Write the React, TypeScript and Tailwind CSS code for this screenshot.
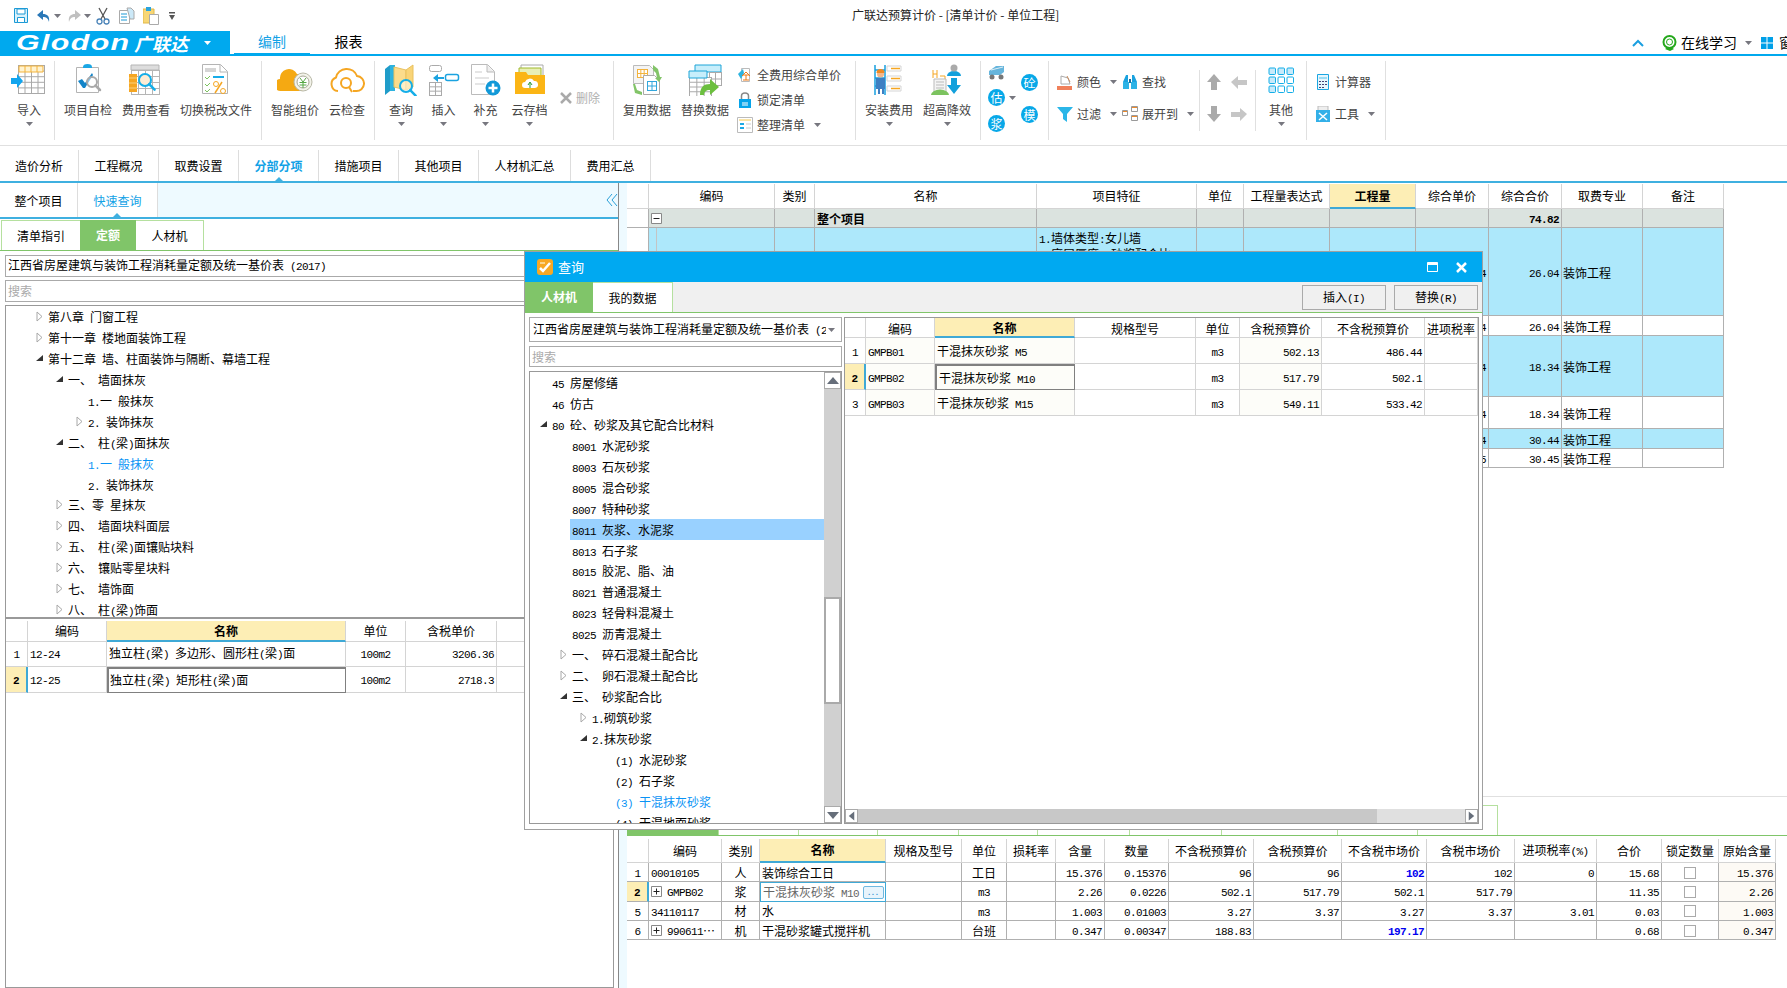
import React from 'react';

const MONO = "[font-family:'Liberation_Mono',monospace] text-[11px] tracking-[-0.6px]";

// latin and digits sit in half width cells, like the bitmap font of the original
const T: React.FC<{ s: string; bold?: boolean }> = ({ s, bold }) => (
  <span className={`whitespace-pre ${bold ? 'font-bold' : ''}`}>
    {s.split(/([\x20-\x7e]+)/).map((p, i) =>
      /^[\x20-\x7e]+$/.test(p) ? (
        <span key={i} className={MONO}>{p}</span>
      ) : (
        <span key={i}>{p}</span>
      ),
    )}
  </span>
);

const Caret: React.FC<{ className?: string }> = ({ className = '' }) => (
  <svg width="7" height="4" viewBox="0 0 7 4" className={`shrink-0 ${className}`}>
    <path d="M0 0h7L3.500 4z" fill="#77777f" />
  </svg>
);

const Open: React.FC = () => (
  <svg width="7" height="11" viewBox="0 0 7 11" className="shrink-0">
    <path d="M1 1l5 4.500-5 4.500z" fill="#fff" stroke="#a8a8a8" />
  </svg>
);

const Shut: React.FC = () => (
  <svg width="7" height="7" viewBox="0 0 7 7" className="shrink-0">
    <path d="M7 0v6H0z" fill="#333" />
  </svg>
);

const Icon: React.FC<{ w?: number; h?: number; children: React.ReactNode }> = ({ w = 36, h = 32, children }) => (
  <svg width={w} height={h} viewBox={`0 0 ${w} ${h}`} className="shrink-0">{children}</svg>
);

const Lines: React.FC<{ x: number; y: number; w: number; h: number; c?: number; r?: number; k?: string }> = ({ x, y, w, h, c = 3, r = 3, k = '#b5b5b5' }) => (
  <g stroke={k} fill="none">
    <rect x={x + 0.5} y={y + 0.5} width={w} height={h} fill="#fff" />
    {Array.from({ length: c - 1 }).map((_, i) => (
      <path key={i} d={`M${x + 0.5 + ((i + 1) * w) / c} ${y}v${h}`} />
    ))}
    {Array.from({ length: r - 1 }).map((_, i) => (
      <path key={i} d={`M${x} ${y + 0.5 + ((i + 1) * h) / r}h${w}`} />
    ))}
  </g>
);

const Glass: React.FC<{ x: number; y: number; r?: number; k?: string }> = ({ x, y, r = 5, k = '#15aee8' }) => (
  <g fill="none" stroke={k}>
    <circle cx={x} cy={y} r={r} strokeWidth="2" fill="#fff" fillOpacity="0.5" />
    <path d={`M${x + r * 0.7} ${y + r * 0.7}l${r * 0.9} ${r * 0.9}`} strokeWidth="2.500" strokeLinecap="round" />
  </g>
);

const ImportIcon = () => (
  <Icon>
    <Lines x={7} y={1} w={26} h={28} c={4} r={5} k="#a9a9a9" />
    <path d="M8 2h24v6H8z" fill="#fff3cf" stroke="#f3b33d" />
    <path d="M14 2v6M20 2v6M26 2v6" stroke="#f3b33d" />
    <path d="M0 14h6v-4l6 7-6 7v-4H0z" fill="#12a5ee" />
  </Icon>
);
const SelfCheckIcon = () => (
  <Icon>
    <path d="M6.500 3.500h22v25h-22z" fill="#fff" stroke="#b4b4b4" />
    <path d="M13 3a4.500 3 0 019 0v1h-9z" fill="#1aa7e5" />
    <path d="M8 17l4-2 3 4 7-10 1 2-8 13h-2z" fill="#1384c8" />
    <Glass x={22} y={18} r={5} k="#a9a9a9" />
  </Icon>
);
const FeeIcon = () => (
  <Icon>
    <path d="M3 1h28v5H3z" fill="#ddd" stroke="#b5b5b5" />
    <Lines x={3} y={6} w={28} h={24} c={4} r={4} />
    <path d="M1 10h8v18H1z" fill="#f5a623" />
    <path d="M1 14h8M1 19h8M1 24h8" stroke="#fbd07c" />
    <circle cx="17" cy="16" r="6" fill="#fbd9a8" />
    <Glass x={17} y={16} r={6} />
  </Icon>
);
const TaxIcon = () => (
  <Icon>
    <path d="M4.500 .5h18l7 7v22h-25z" fill="#fff" stroke="#b4b4b4" />
    <path d="M22 1v7h7" fill="none" stroke="#b4b4b4" />
    <path d="M7 4h11v4H7z" fill="#d5d5d5" />
    <path d="M7 13l2 2 3-3M7 20l2 2 3-3M7 26l2 2 3-3" stroke="#7cc35f" fill="none" />
    <path d="M15 13h11" stroke="#18ace8" strokeWidth="2" />
    <path d="M24 18l-7 11" stroke="#f5a623" strokeWidth="1.500" />
    <circle cx="18" cy="20" r="2.500" fill="none" stroke="#f5a623" />
    <circle cx="25" cy="27" r="2.500" fill="none" stroke="#f5a623" />
  </Icon>
);
const SmartIcon = () => (
  <Icon>
    <path d="M4 27a6 6 0 01-1-12 9 9 0 0117-5h6v17z" fill="#f5a912" />
    <circle cx="26" cy="18" r="9" fill="#f3f3ea" stroke="#b9b9a8" />
    <circle cx="26" cy="18" r="6" fill="#fff" stroke="#a8a896" />
    <path d="M23 14l3 4 3-4M22.500 18.500h7M22.500 21h7M26 18v6" stroke="#57a845" fill="none" />
  </Icon>
);
const CloudIcon = () => (
  <Icon>
    <path d="M9 27a7 7 0 01-2-13.500A11 11 0 0128 12a7.500 7.500 0 01-1 15h-3" fill="none" stroke="#f5a623" strokeWidth="2" />
    <circle cx="17" cy="19" r="5" fill="none" stroke="#f5a623" strokeWidth="2" />
    <path d="M20 23l3 5" stroke="#f5a623" strokeWidth="2" />
  </Icon>
);
const QueryIcon = () => (
  <Icon w={34}>
    <path d="M1 5l5-4v26l-5 4z" fill="#1f9cc9" />
    <path d="M6 1h5v26H6z" fill="#2db3df" />
    <path d="M10 3l12 3v20l-12-3z" fill="#fbdc8c" stroke="#e9c15f" />
    <path d="M22 6l7-5v22l-7 3z" fill="#f9d477" stroke="#e9c15f" />
    <Glass x={22} y={22} r={6} />
  </Icon>
);
const InsertIcon = () => (
  <Icon w={32}>
    <rect x="1.500" y="1.500" width="12" height="6" rx="2" fill="#fff" stroke="#aaa" />
    <Lines x={1} y={18} w={12} h={13} c={2} r={3} k="#aaa" />
    <path d="M5 14l5-4v3h6v2h-6v3z" fill="#1ba3e0" />
    <rect x="17.500" y="10.500" width="13" height="6" rx="2" fill="#fff" stroke="#1ba3e0" strokeWidth="1.500" />
  </Icon>
);
const AddIcon = () => (
  <Icon w={32}>
    <path d="M1.500 .5h16l7 7v23h-23z" fill="#fff" stroke="#bbb" />
    <path d="M17 1v7h7" fill="#eee" stroke="#bbb" />
    <path d="M5 8h7M5 14h14M5 20h10" stroke="#ddd" strokeWidth="1.500" />
    <circle cx="23" cy="24" r="7.500" fill="#1299d8" />
    <path d="M23 19.500v9M18.500 24h9" stroke="#fff" strokeWidth="2.500" />
  </Icon>
);
const SaveIcon = () => (
  <Icon w={32}>
    <path d="M7 1h22v14H7z" fill="#fff" stroke="#aaa" />
    <path d="M5 4h22v14H5z" fill="#e8efb5" stroke="#a0ba2f" />
    <path d="M1 8h11l2 3h17v19H1z" fill="#fbb515" />
    <path d="M11 24a3 3 0 010-6 5 5 0 019-1 3.500 3.500 0 011 7z" fill="#fff" />
    <path d="M16 24v-5M14 21l2-3 2 3" stroke="#2e9a3a" fill="none" />
  </Icon>
);
const ReuseIcon = () => (
  <Icon w={32}>
    <path d="M2.500 1.500h16l4 4v14h-20z" fill="#f4f4f4" stroke="#bbb" />
    <Lines x={6} y={5} w={10} h={8} c={3} r={2} k="#f3b33d" />
    <path d="M12.500 11.500h11l5 5v14h-16z" fill="#fff" stroke="#aaa" />
    <Lines x={16} y={17} w={9} h={9} c={2} r={2} k="#33a7dc" />
    <path d="M22 1l5 4 2 8h2l-3 5-4-4h2l-1-5-3-3z" fill="#82c468" />
    <path d="M2 20h2l2 6 5 2v3l-7-2z" fill="#82c468" />
  </Icon>
);
const ReplaceIcon = () => (
  <Icon w={34}>
    <path d="M7 1h26v7H7z" fill="#c7eefb" stroke="#1fa5d8" />
    <Lines x={21} y={8} w={12} h={13} c={2} r={2} k="#aaa" />
    <Lines x={1} y={13} w={22} h={19} c={3} r={4} k="#aaa" />
    <path d="M1 7h18v7H1z" fill="#c7eefb" stroke="#1fa5d8" />
    <path d="M12 31c0-8 4-11 10-11v-5l9 8-9 8v-5c-4 0-6 2-6 5z" fill="#6cbf3f" />
  </Icon>
);
const InstallIcon = () => (
  <Icon w={32}>
    <path d="M2 1v30M12 1v30M2 6h10M2 14h10M2 22h10" stroke="#18a0df" strokeWidth="1.500" fill="none" />
    <path d="M14 2h14v5H14zM14 12h14v5H14zM14 22h14v5H14z" fill="#fff" stroke="#d5d5d5" />
    <path d="M18 4.500h9M18 14.500h9M18 24.500h9" stroke="#f5a623" strokeWidth="1.500" />
    <path d="M3 14h9v11h-1v5H9v-5H7v5H5v-5H3z" fill="#3d7fc2" />
    <circle cx="7.500" cy="10" r="3.500" fill="#f3b78a" />
    <path d="M3.500 9a4 4 0 018 0z" fill="#f08a24" />
  </Icon>
);
const HighIcon = () => (
  <Icon w={32}>
    <path d="M2 6v8M6 6v8M2 10h4M9 12h5v19" stroke="#f5a623" fill="none" />
    <path d="M3 15h12v15H3z" fill="#f4f4f4" stroke="#bbb" />
    <path d="M5 18h8M5 21h8M5 24h8" stroke="#bbb" />
    <path d="M0 31a5 3 0 0118 0z" fill="#7cc35f" />
    <path d="M16 12a7 5 0 0114 0z" fill="#12a0dc" />
    <circle cx="23" cy="4" r="3.500" fill="#aaa" />
    <path d="M20 14h6v7h4l-7 9-7-9h4z" fill="#12a0dc" />
  </Icon>
);
const Cn: React.FC<{ s: string }> = ({ s }) => (
  <span className="w-[17px] h-[17px] rounded-full bg-[#08a8e8] text-white text-[12px] leading-[17px] text-center shrink-0">{s}</span>
);

const Big: React.FC<{ w: string; label: string; icon: React.ReactNode; caret?: boolean }> = ({ w, label, icon, caret = true }) => (
  <div className={`${w} flex flex-col items-center shrink-0`}>
    <div className="h-[36px] mt-[6px] flex items-center justify-center">{icon}</div>
    <div className="h-[16px] mt-[4px] leading-[16px] text-[12px] text-[#444] whitespace-nowrap">{label}</div>
    {caret && <Caret className="mt-[4px]" />}
  </div>
);

const Sep = () => <div className="w-px h-[79px] mt-[5px] bg-[#e0e0e0] shrink-0" />;
const ShortSep = () => <div className="w-px h-[61px] mt-[14px] bg-[#e0e0e0] shrink-0" />;

const Small: React.FC<{ label: string; icon: React.ReactNode; w: string; caret?: boolean }> = ({ label, icon, w, caret }) => (
  <div className={`${w} h-[16px] flex items-center gap-[4px] text-[12px] text-[#444] whitespace-nowrap`}>
    <span className="w-[16px] flex justify-center">{icon}</span>
    <span>{label}</span>
    {caret && <Caret className="ml-[5px]" />}
  </div>
);

const Ribbon = () => (
  <div className="h-[90px] flex border-b border-[#e0e0e0] shrink-0">
    <div className="w-[54px] pl-[2px]"><Big w="w-[54px]" label="导入" icon={<ImportIcon />} /></div>
    <Sep />
    <Big w="w-[62px] pl-[4px]" label="项目自检" icon={<SelfCheckIcon />} caret={false} />
    <Big w="w-[58px]" label="费用查看" icon={<FeeIcon />} caret={false} />
    <Big w="w-[82px]" label="切换税改文件" icon={<TaxIcon />} caret={false} />
    <div className="w-[4px]" />
    <Sep />
    <Big w="w-[66px]" label="智能组价" icon={<SmartIcon />} caret={false} />
    <Big w="w-[38px]" label="云检查" icon={<CloudIcon />} caret={false} />
    <div className="w-[8px]" />
    <Sep />
    <div className="w-[5px]" />
    <Big w="w-[42px]" label="查询" icon={<QueryIcon />} />
    <Big w="w-[43px]" label="插入" icon={<InsertIcon />} />
    <Big w="w-[41px]" label="补充" icon={<AddIcon />} />
    <Big w="w-[47px]" label="云存档" icon={<SaveIcon />} />
    <div className="w-[60px] h-[16px] mt-[34px] flex items-center gap-[4px] pl-[7px] text-[12px] text-[#b0b0b0]">
      <svg width="12" height="12" viewBox="0 0 12 12"><path d="M1 1l10 10M11 1L1 11" stroke="#aaa" strokeWidth="2.500" /></svg>
      删除
    </div>
    <Sep />
    <div className="w-[4px]" />
    <Big w="w-[58px]" label="复用数据" icon={<ReuseIcon />} caret={false} />
    <Big w="w-[58px]" label="替换数据" icon={<ReplaceIcon />} caret={false} />
    <div className="w-[121px] flex flex-col gap-[9px] pt-[11px] pl-[3px]">
      <Small w="w-full" label="全费用综合单价" icon={
        <Icon w={16} h={16}><path d="M4.500 1.500h8v13h-8z" fill="#fff" stroke="#bbb" /><path d="M1 7l5-5 1 4-3 6z" fill="#2db3df" /><path d="M5 9l4-4 4 4M6 8h6M9 8v5M6 13h6" stroke="#ef7d1a" fill="none" /></Icon>
      } />
      <Small w="w-full" label="锁定清单" icon={
        <Icon w={16} h={16}><path d="M4.500 7V4a3.500 3 0 017 0v3" fill="none" stroke="#888" strokeWidth="1.500" /><path d="M2 7h12v9H2z" fill="#06a4ea" /><path d="M5 11h6M5 13h6" stroke="#fff" /></Icon>
      } />
      <Small w="w-full" label="整理清单" caret icon={
        <Icon w={16} h={16}><path d="M.5 .5h15v15H.5z" fill="#fff" stroke="#bbb" /><path d="M2 2h12v2H2z" fill="#f8e3a6" /><path d="M3 6h4v2H3zM3 10h4v2H3z" fill="#1ba9e4" /><path d="M9 7h5M9 11h5" stroke="#ccc" /></Icon>
      } />
    </div>
    <Sep />
    <div className="w-[4px]" />
    <Big w="w-[58px]" label="安装费用" icon={<InstallIcon />} />
    <Big w="w-[58px]" label="超高降效" icon={<HighIcon />} />
    <div className="w-[4px]" />
    <Sep />
    <div className="w-[67px] flex pt-[8px] pl-[7px]">
      <div className="w-[33px] flex flex-col items-start gap-[9px]">
        <Icon w={18} h={16}><path d="M1 7l7-5h8v6l-4 3H1z" fill="#66b5dc" /><path d="M3 6l12-3" stroke="#dfeef5" /><circle cx="4" cy="13" r="2.500" fill="#777" /><circle cx="13" cy="13" r="2.500" fill="#777" /></Icon>
        <div className="flex items-center gap-[4px]"><Cn s="估" /><Caret /></div>
        <Cn s="浆" />
      </div>
      <div className="flex flex-col gap-[15px] pt-[10px]"><Cn s="砼" /><Cn s="模" /></div>
    </div>
    <Sep />
    <div className="w-[150px] flex flex-col gap-[16px] pt-[18px] pl-[8px]">
      <div className="flex">
        <Small w="w-[65px]" label="颜色" caret icon={
          <Icon w={16} h={16}><path d="M4 2l7 2 2 6-9 0z" fill="#fff" stroke="#aaa" /><path d="M10 2l3 6" stroke="#c98a5a" /><path d="M0 12h15v4H0z" fill="#f0805a" /></Icon>
        } />
        <Small w="w-[70px]" label="查找" icon={
          <Icon w={16} h={16}><path d="M1 8l3-7h2v7zM15 8l-3-7h-2v7z" fill="#1aa2df" /><path d="M1 8h6v7H1zM9 8h6v7H9z" fill="#2db3e6" /><path d="M7 5h2v4H7z" fill="#15719f" /></Icon>
        } />
      </div>
      <div className="flex">
        <Small w="w-[65px]" label="过滤" caret icon={
          <Icon w={16} h={16}><path d="M0 1h16l-6 7v8l-4-3V8z" fill="#2bb6e8" /></Icon>
        } />
        <Small w="w-[70px]" label="展开到" caret icon={
          <Icon w={16} h={16}><path d="M.5 4.500h5v5h-5zM9.500 .5h6v5h-6zM9.500 9.500h6v5h-6z" fill="#fff" stroke="#999" /><path d="M1 5h4v1H1zM10 1h5v1h-5zM10 10h5v1h-5z" fill="#ef8a2a" /></Icon>
        } />
      </div>
    </div>
    <ShortSep />
    <div className="w-[55px] grid grid-cols-[25px_25px] grid-rows-2 pt-[18px] h-[82px] pl-[6px]">
      <svg width="16" height="16" viewBox="0 0 16 16"><path d="M8 0l7 8h-4v8H5V8H1z" fill="#aaa" /></svg>
      <svg width="16" height="16" viewBox="0 0 16 16"><path d="M0 8l7-6v4h9v5H7v4z" fill="#c6c6c6" /></svg>
      <svg width="16" height="16" viewBox="0 0 16 16"><path d="M5 0h6v8h4l-7 8-7-8h4z" fill="#aaa" /></svg>
      <svg width="16" height="16" viewBox="0 0 16 16"><path d="M16 8l-7-6v4H0v5h9v4z" fill="#c6c6c6" /></svg>
    </div>
    <ShortSep />
    <div className="w-[50px]">
      <Big w="w-[50px]" label="其他" icon={
        <Icon w={26} h={26}>
          {[1, 10, 19].map((y) => [1, 10, 19].map((x) => (
            <rect key={`${x}${y}`} x={x} y={y} width="6.500" height="6.500" rx="1" fill={x === 1 || y === 1 ? '#c8eafa' : '#fff'} stroke="#12aee8" />
          )))}
        </Icon>
      } />
    </div>
    <Sep />
    <div className="w-[78px] flex flex-col gap-[16px] pt-[18px] pl-[8px]">
      <Small w="w-full" label="计算器" icon={
        <Icon w={16} h={16}><path d="M2.500 .5h11v15h-11z" fill="#e6f6fd" stroke="#1aa6e2" /><path d="M4 3h8v2H4z" fill="#9adcf5" /><path d="M4 7h2v1H4zM7 7h2v1H7zM10 7h2v1h-2zM4 10h2v1H4zM7 10h2v1H7zM10 10h2v1h-2zM4 13h2v1H4zM7 13h2v1H7z" fill="#447" /></Icon>
      } />
      <Small w="w-full" label="工具" caret icon={
        <Icon w={16} h={16}><path d="M3 0h10v8H3z" fill="#eee" stroke="#bbb" /><path d="M1 4h14v12H1z" fill="#33b0e8" /><path d="M4 7l8 7M12 7l-8 7" stroke="#fff" strokeWidth="1.500" /></Icon>
      } />
    </div>
    <Sep />
  </div>
);

const TITLE_ICONS = (
  <div className="w-[852px] h-full flex items-center pl-[14px] shrink-0">
    <svg width="14" height="15" viewBox="0 0 14 15"><path d="M.5 .5h13v14H.5z" fill="#d9f1fb" stroke="#1c9ad6" /><path d="M3 1h8v5H3z" fill="#fff" stroke="#1c9ad6" /><path d="M3.500 9.500h7v5h-7z" fill="#fff" stroke="#1c9ad6" /></svg>
    <svg width="14" height="14" viewBox="0 0 14 14" className="ml-[9px]"><path d="M6 1L0 6l6 5V8c3 0 5 1 6 5 1-6-2-8-6-8z" fill="#2a78b8" /></svg>
    <Caret className="ml-[3px]" />
    <svg width="14" height="14" viewBox="0 0 14 14" className="ml-[6px]"><path d="M8 1l6 5-6 5V8c-3 0-5 1-6 5C1 7 4 5 8 5z" fill="#c0c0c0" /></svg>
    <Caret className="ml-[3px]" />
    <svg width="14" height="18" viewBox="0 0 14 18" className="ml-[5px]"><path d="M3 1l6 11M11 1L5 12" stroke="#555" strokeWidth="1.300" /><circle cx="3.500" cy="14.500" r="2.500" fill="none" stroke="#4a83b8" strokeWidth="1.300" /><circle cx="10.500" cy="14.500" r="2.500" fill="none" stroke="#4a83b8" strokeWidth="1.300" /></svg>
    <svg width="16" height="17" viewBox="0 0 16 17" className="ml-[9px]"><path d="M.5 3.500h10v13H.5z" fill="#fff" stroke="#aaa" /><path d="M2 7h6M2 10h6M2 13h6" stroke="#1c9ad6" /><path d="M8 1h4l3 3v8h-4z" fill="#cce9f8" stroke="#aaa" /></svg>
    <svg width="16" height="19" viewBox="0 0 16 19" className="ml-[8px]"><path d="M0 3h11v14H0z" fill="#f8d775" stroke="#e0b84a" /><path d="M3 1h5v4H3z" fill="#2aa4dd" /><path d="M6.500 8.500h9v10h-9z" fill="#fff" stroke="#aaa" /></svg>
    <svg width="6" height="8" viewBox="0 0 6 8" className="ml-[10px]"><path d="M0 0h6v1.500H0zM0 3h6L3 8z" fill="#555" /></svg>
  </div>
);

const Head: React.FC<{ s: string; on?: boolean }> = ({ s, on }) => (
  <div className={`h-full flex items-center justify-center overflow-hidden whitespace-nowrap border-r border-b border-[#d4d4d4] ${on ? 'bg-[#fdeeb5] font-bold !border-b-[2px] !border-b-[#3fa9d6]' : 'bg-white'}`}>
    <T s={s} bold={on} />
  </div>
);

const Cell: React.FC<{ className?: string; children?: React.ReactNode }> = ({ className = '', children }) => (
  <div className={`h-full flex items-center overflow-hidden whitespace-nowrap border-r border-b ${className}`}>{children}</div>
);

const RowNo: React.FC<{ n: number; on?: boolean }> = ({ n, on }) => (
  <Cell className={`justify-center ${on ? 'bg-[#fdeeb5] font-bold !border-r-[2px] !border-r-[#3fa9d6]' : ''}`}><T s={String(n)} bold={on} /></Cell>
);

const Plus = () => (
  <svg width="11" height="11" viewBox="0 0 11 11" className="shrink-0 mr-[5px]"><path d="M.5 .5h10v10H.5z" fill="#fff" stroke="#888" /><path d="M2.500 5.500h6M5.500 2.500v6" stroke="#222" /></svg>
);
const Minus = () => (
  <svg width="11" height="11" viewBox="0 0 11 11" className="shrink-0"><path d="M.5 .5h10v10H.5z" fill="#fff" stroke="#888" /><path d="M2.500 5.500h6" stroke="#222" /></svg>
);

// --- left side ---
type Node = { l: 0 | 1 | 2 | 3; t: string; a?: 'open' | 'shut'; hit?: boolean; on?: boolean };

const PAD = ['pl-[6px]', 'pl-[26px]', 'pl-[46px]', 'pl-[69px]'];
const PAD_L = ['pl-[26px]', 'pl-[46px]', 'pl-[66px]', 'pl-[86px]'];

const TreeRow: React.FC<{ n: Node; pad: string }> = ({ n, pad }) => (
  <div className={`h-[20.950px] flex items-center ${pad} shrink-0`}>
    <span className="w-[14px] flex justify-center shrink-0">
      {n.a === 'open' && <Open />}
      {n.a === 'shut' && <Shut />}
    </span>
    <span className={`flex-1 pl-[2px] h-full leading-[21px] whitespace-pre ${n.on ? 'bg-[#99d1ff]' : ''} ${n.hit ? 'text-[#0a93f5]' : ''}`}>
      <T s={n.t} />
    </span>
  </div>
);

const LEFT_TREE: Node[] = [
  { l: 0, t: '第八章 门窗工程', a: 'open' },
  { l: 0, t: '第十一章 楼地面装饰工程', a: 'open' },
  { l: 0, t: '第十二章 墙、柱面装饰与隔断、幕墙工程', a: 'shut' },
  { l: 1, t: '一、 墙面抹灰', a: 'shut' },
  { l: 2, t: '1.一 般抹灰' },
  { l: 2, t: '2. 装饰抹灰', a: 'open' },
  { l: 1, t: '二、 柱(梁)面抹灰', a: 'shut' },
  { l: 2, t: '1.一 般抹灰', hit: true },
  { l: 2, t: '2. 装饰抹灰' },
  { l: 1, t: '三、零 星抹灰', a: 'open' },
  { l: 1, t: '四、 墙面块料面层', a: 'open' },
  { l: 1, t: '五、 柱(梁)面镶贴块料', a: 'open' },
  { l: 1, t: '六、 镶贴零星块料', a: 'open' },
  { l: 1, t: '七、 墙饰面', a: 'open' },
  { l: 1, t: '八、 柱(梁)饰面', a: 'open' },
];

const Panel = () => (
  <div className="w-[619px] shrink-0 flex flex-col border-r border-[#888]">
    <div className="h-[36px] flex border-b-2 border-[#3fb0e0] bg-[#eefaff] shrink-0">
      <div className="w-[78px] pt-[2px] bg-white border-r border-[#ddd] flex items-center justify-center">整个项目</div>
      <div className="relative w-[80px] pt-[2px] bg-white border-r border-[#ddd] flex items-center justify-center text-[#13a2e6]">
        快速查询
        <span className="absolute bottom-0 left-[35px] w-0 h-0 border-x-[4px] border-x-transparent border-b-[4px] border-b-[#3fb0e0]" />
      </div>
      <div className="flex-1 flex items-center justify-end">
        <svg width="12" height="14" viewBox="0 0 12 14"><path d="M6 1L1 7l5 6M11 1L6 7l5 6" fill="none" stroke="#2aa0d8" /></svg>
      </div>
    </div>
    <div className="h-[32px] pt-[1px] flex items-stretch border-b border-[#80c56a] shrink-0 pl-[1px]">
      <div className="w-[79px] border-t border-l border-[#b5e09f] flex items-center justify-center">清单指引</div>
      <div className="w-[56px] bg-[#80c569] text-white font-bold flex items-center justify-center">定额</div>
      <div className="w-[68px] border-t border-r border-[#b5e09f] flex items-center justify-center">人材机</div>
    </div>
    <div className="flex-1 flex flex-col pl-[5px] pr-[4px] pt-[4px] min-h-0">
      <div className="h-[22px] border border-[#aaa] pl-[2px] flex items-center shrink-0"><T s="江西省房屋建筑与装饰工程消耗量定额及统一基价表 (2017)" /></div>
      <div className="h-[22px] mt-[3px] border border-[#aaa] pl-[2px] flex items-center text-[#aaa] shrink-0">搜索</div>
      <div className="mt-[3px] h-[312px] border-t border-x border-[#999] flex flex-col overflow-hidden shrink-0">
        {LEFT_TREE.map((n, i) => <TreeRow key={i} n={n} pad={PAD_L[n.l]} />)}
      </div>
      <div className="flex-1 border border-[#999] border-t-2 pt-[2px] min-h-0 overflow-hidden">
        <div className="h-[21px] grid grid-cols-[22px_79px_239px_60px_91px_1fr]">
          {['', '编码', '名称', '单位', '含税单价', '不含税单价'].map((h, i) => <Head key={i} s={h} on={h === '名称'} />)}
        </div>
        <div className="h-[25px] grid grid-cols-[22px_79px_239px_60px_91px_1fr] [&>div]:border-[#d4d4d4]">
          <RowNo n={1} />
          <Cell className="pl-[2px]"><T s="12-24" /></Cell>
          <Cell className="pl-[2px]"><T s="独立柱(梁) 多边形、圆形柱(梁)面" /></Cell>
          <Cell className="justify-center"><T s="100m2" /></Cell>
          <Cell className="justify-end pr-[2px]"><T s="3206.36" /></Cell>
          <Cell />
        </div>
        <div className="h-[26px] grid grid-cols-[22px_79px_239px_60px_91px_1fr] [&>div]:border-[#d4d4d4]">
          <RowNo n={2} on />
          <Cell className="pl-[2px]"><T s="12-25" /></Cell>
          <Cell className="pl-[1px] border-2 !border-[#808080]"><T s="独立柱(梁) 矩形柱(梁)面" /></Cell>
          <Cell className="justify-center"><T s="100m2" /></Cell>
          <Cell className="justify-end pr-[2px]"><T s="2718.3" /></Cell>
          <Cell />
        </div>
      </div>
    </div>
  </div>
);

// --- right side ---
const MAIN_COLS = 'grid grid-cols-[22px_126px_40px_222px_160px_47px_86px_86px_73px_73px_81px_81px]';
const MAIN_HEAD = ['', '编码', '类别', '名称', '项目特征', '单位', '工程量表达式', '工程量', '综合单价', '综合合价', '取费专业', '备注'];
const MAIN_ROWS = [
  { h: 'h-[88px]', tone: 'bg-[#ade8fb]', v: '26.04', tall: true },
  { h: 'h-[20px]', tone: 'bg-white', v: '26.04' },
  { h: 'h-[61px]', tone: 'bg-[#ade8fb]', v: '18.34' },
  { h: 'h-[32px]', tone: 'bg-white', v: '18.34' },
  { h: 'h-[20px]', tone: 'bg-[#ade8fb]', v: '30.44' },
  { h: 'h-[19px]', tone: 'bg-white', v: '30.45' },
];

const MainTable = () => (
  <div className="h-[614px] shrink-0 overflow-hidden border-b border-[#e0e0e0]">
    <div className={`h-[26px] ${MAIN_COLS} pt-px w-[1097px]`}>
      {MAIN_HEAD.map((h, i) => <Head key={i} s={h} on={h === '工程量'} />)}
    </div>
    <div className={`h-[19px] ${MAIN_COLS} w-[1097px] [&>div]:border-[#b0b0b0]`}>
      <Cell className="bg-white" />
      <Cell className="bg-[#dbe3df] pl-[2px]"><Minus /></Cell>
      <Cell className="bg-[#dbe3df]" />
      <Cell className="bg-[#dbe3df] font-bold pl-[2px] pt-[2px]">整个项目</Cell>
      {['', '', '', '', ''].map((_, i) => <Cell key={i} className="bg-[#dbe3df]" />)}
      <Cell className="bg-[#dbe3df] justify-end pr-[2px] pt-[2px]"><T s="74.82" bold /></Cell>
      <Cell className="bg-[#dbe3df]" />
      <Cell className="bg-[#dbe3df]" />
    </div>
    {MAIN_ROWS.map((r, i) => (
      <div key={i} className={`${r.h} ${MAIN_COLS} w-[1097px] [&>div]:border-[#b0b0b0]`}>
        <Cell className="bg-white" />
        <Cell className={`${r.tone} !items-stretch pl-[7px]`}><span className="w-px bg-[#c4c4c4]" /></Cell>
        <Cell className={r.tone} />
        <Cell className={r.tone} />
        <Cell className={`${r.tone} pl-[2px] !items-start`}>
          {r.tall && (
            <div className="leading-[14px] pt-[3px]">
              <div><T s="1.墙体类型:女儿墙" /></div>
              <div><T s="2.底层厚度、砂浆配合比:10" /></div>
            </div>
          )}
        </Cell>
        <Cell className={r.tone} />
        <Cell className={r.tone} />
        <Cell className={r.tone} />
        <Cell className={`${r.tone} justify-end pr-[2px] pt-[2px]`}><T s={r.v} /></Cell>
        <Cell className={`${r.tone} justify-end pr-[2px] pt-[2px]`}><T s={r.v} /></Cell>
        <Cell className={`${r.tone} pl-[1px] pt-[2px]`}>装饰工程</Cell>
        <Cell className={r.tone} />
      </div>
    ))}
  </div>
);

const BOT_COLS = 'grid grid-cols-[22px_73px_38px_126px_76px_45px_49px_49px_64px_85px_88px_85px_88px_82px_65px_57px_57px]';
const BOT_HEAD = ['', '编码', '类别', '名称', '规格及型号', '单位', '损耗率', '含量', '数量', '不含税预算价', '含税预算价', '不含税市场价', '含税市场价', '进项税率(%)', '合价', '锁定数量', '原始含量'];
const BOT_ROWS = [
  { n: 1, code: '00010105', kind: '人', name: '装饰综合工日', unit: '工日', v: ['15.376', '0.15376', '96', '96', '102', '102', '0', '15.68', '15.376'], plus: false },
  { n: 2, code: 'GMPB02', kind: '浆', name: '干混抹灰砂浆 M10', unit: 'm3', v: ['2.26', '0.0226', '502.1', '517.79', '502.1', '517.79', '', '11.35', '2.26'], plus: true, on: true },
  { n: 5, code: '34110117', kind: '材', name: '水', unit: 'm3', v: ['1.003', '0.01003', '3.27', '3.37', '3.27', '3.37', '3.01', '0.03', '1.003'], plus: false },
  { n: 6, code: '990611…', kind: '机', name: '干混砂浆罐式搅拌机', unit: '台班', v: ['0.347', '0.00347', '188.83', '', '197.17', '', '', '0.68', '0.347'], plus: true },
];

const Num: React.FC<{ s: string; hot?: boolean; className?: string }> = ({ s, hot, className = '' }) => (
  <Cell className={`justify-end pr-[2px] ${hot ? 'text-[#0000f0]' : ''} ${className}`}><T s={s} bold={hot} /></Cell>
);

const BottomGrid = () => (
  <div className="w-[1150px]">
    <div className={`h-[24px] ${BOT_COLS}`}>
      {BOT_HEAD.map((h, i) => <Head key={i} s={h} on={h === '名称'} />)}
    </div>
    {BOT_ROWS.map((r) => (
      <div key={r.n} className={`h-[19.300px] ${BOT_COLS} [&>div]:border-[#b0b0b0] [&>div]:pt-[1px]`}>
        <RowNo n={r.n} on={r.on} />
        <Cell className="pl-[2px]">{r.plus && <Plus />}<T s={r.code.replace('…', '')} />{r.code.endsWith('…') && <span>…</span>}</Cell>
        <Cell className="justify-center">{r.kind}</Cell>
        {r.on ? (
          <Cell className="pl-[2px] border !border-[#3fa9d6] text-[#666]">
            <span className="flex-1"><T s={r.name} /></span>
            <span className="w-[21px] h-[13px] mr-[1px] rounded-[2px] border border-[#6fb8e0] bg-[#e8f4fc] text-[#2a8fd0] text-[10px] leading-[8px] text-center tracking-[1px]">...</span>
          </Cell>
        ) : (
          <Cell className="pl-[2px]"><T s={r.name} /></Cell>
        )}
        <Cell />
        <Cell className="justify-center"><T s={r.unit} /></Cell>
        <Cell />
        <Num s={r.v[0]} />
        <Num s={r.v[1]} />
        <Num s={r.v[2]} />
        <Num s={r.v[3]} />
        <Num s={r.v[4]} hot={r.v[4] === '102' || r.v[4] === '197.17'} />
        <Num s={r.v[5]} />
        <Num s={r.v[6]} />
        <Num s={r.v[7]} />
        <Cell className="justify-center"><span className="w-[12px] h-[12px] border border-[#aaa] bg-white" /></Cell>
        <Num s={r.v[8]} className="bg-[#fdfaf5]" />
      </div>
    ))}
  </div>
);

const BOT_TABS = ['w-[92px] bg-[#80c569]', 'w-[80px]', 'w-[79px]', 'w-[81px]', 'w-[79px]', 'w-[92px]', 'w-[92px]', 'w-[116px]', 'w-[80px]', 'w-[80px]'];

const Lower = () => (
  <div className="flex-1 flex flex-col min-h-0">
    <div className="h-[39px] flex items-end shrink-0 border-b border-[#80c56a]">
      {BOT_TABS.map((c, i) => (
        <div key={i} className={`${c} ${i === BOT_TABS.length - 1 ? 'h-[30px] border-t' : 'h-[7px]'} border-r border-[#b5e09f] shrink-0`} />
      ))}
    </div>
    <div className="pt-[3px]"><BottomGrid /></div>
  </div>
);

// --- query dialog, floats over the page ---
const DLG_TREE: Node[] = [
  { l: 0, t: '45 房屋修缮' },
  { l: 0, t: '46 仿古' },
  { l: 0, t: '80 砼、砂浆及其它配合比材料', a: 'shut' },
  { l: 1, t: '8001 水泥砂浆' },
  { l: 1, t: '8003 石灰砂浆' },
  { l: 1, t: '8005 混合砂浆' },
  { l: 1, t: '8007 特种砂浆' },
  { l: 1, t: '8011 灰浆、水泥浆', on: true },
  { l: 1, t: '8013 石子浆' },
  { l: 1, t: '8015 胶泥、脂、油' },
  { l: 1, t: '8021 普通混凝土' },
  { l: 1, t: '8023 轻骨料混凝土' },
  { l: 1, t: '8025 沥青混凝土' },
  { l: 1, t: '一、 碎石混凝土配合比', a: 'open' },
  { l: 1, t: '二、 卵石混凝土配合比', a: 'open' },
  { l: 1, t: '三、 砂浆配合比', a: 'shut' },
  { l: 2, t: '1.砌筑砂浆', a: 'open' },
  { l: 2, t: '2.抹灰砂浆', a: 'shut' },
  { l: 3, t: '(1) 水泥砂浆' },
  { l: 3, t: '(2) 石子浆' },
  { l: 3, t: '(3) 干混抹灰砂浆', hit: true },
  { l: 3, t: '(4) 干混地面砂浆' },
];

const DLG_COLS = 'grid grid-cols-[21px_69px_140px_121px_44px_82px_103px_53px]';
const DLG_ROWS = [
  { n: 1, code: 'GMPB01', name: '干混抹灰砂浆 M5', a: '502.13', b: '486.44' },
  { n: 2, code: 'GMPB02', name: '干混抹灰砂浆 M10', a: '517.79', b: '502.1', on: true },
  { n: 3, code: 'GMPB03', name: '干混抹灰砂浆 M15', a: '549.11', b: '533.42' },
];

const ScrollBtn: React.FC<{ d: string; className?: string }> = ({ d, className = '' }) => (
  <div className={`bg-white border border-[#aaa] flex items-center justify-center shrink-0 ${className}`}>
    <svg width="12" height="12" viewBox="0 0 12 12"><path d={d} fill="#666e7a" /></svg>
  </div>
);

const Dialog = () => (
  <div className="absolute left-[524px] top-[251px] w-[959px] h-[579px] border border-[#a0a0a0] bg-[#f0f0f0] flex flex-col">
    <div className="h-[30px] bg-[#00a9f1] flex items-center text-white shrink-0">
      <svg width="16" height="16" viewBox="0 0 16 16" className="ml-[12px]"><rect width="16" height="16" rx="3" fill="#f7a823" /><path d="M3 9l3 3 7-8" stroke="#fff" strokeWidth="2.500" fill="none" /><path d="M3 4h5" stroke="#fde3ae" strokeWidth="1.500" /></svg>
      <span className="ml-[5px] text-[13px]">查询</span>
      <span className="flex-1" />
      <svg width="12" height="10" viewBox="0 0 12 10"><path d="M.5 .5h10v9H.5z" fill="#fff" stroke="#fff" /><path d="M1 3h9v6H1z" fill="#00a9f1" /></svg>
      <svg width="11" height="11" viewBox="0 0 11 11" className="ml-[17px] mr-[15px]"><path d="M1 1l9 9M10 1l-9 9" stroke="#fff" strokeWidth="2.500" /></svg>
    </div>
    <div className="h-[31px] flex border-b border-[#80c56a] shrink-0">
      <div className="w-[68px] bg-[#80c569] text-white font-bold flex items-center justify-center">人材机</div>
      <div className="w-[80px] bg-white border-r border-t border-[#b5e09f] flex items-center justify-center">我的数据</div>
      <div className="flex-1" />
      <div className="w-[84px] h-[25px] mt-[3px] border border-[#aaa] flex items-center justify-center"><T s="插入(I)" /></div>
      <div className="w-[84px] h-[25px] mt-[3px] ml-[8px] mr-[4px] border border-[#aaa] flex items-center justify-center"><T s="替换(R)" /></div>
    </div>
    <div className="flex-1 flex pl-[4px] pr-[4px] pt-[4px] pb-[5px] gap-[2px] min-h-0 bg-white">
      <div className="w-[313px] flex flex-col shrink-0">
        <div className="h-[25px] border border-[#aaa] pl-[3px] pr-[6px] flex items-center shrink-0">
          <div className="flex-1 overflow-hidden whitespace-nowrap"><T s="江西省房屋建筑与装饰工程消耗量定额及统一基价表 (2017)" /></div>
          <Caret className="ml-[2px]" />
        </div>
        <div className="h-[21px] mt-[4px] border border-[#aaa] pl-[2px] flex items-center text-[#aaa] shrink-0">搜索</div>
        <div className="flex-1 mt-[4px] border border-[#999] flex min-h-0">
          <div className="flex-1 flex flex-col overflow-hidden">
            {DLG_TREE.map((n, i) => <TreeRow key={i} n={n} pad={PAD[n.l]} />)}
          </div>
          <div className="w-[17px] bg-[#d0d0d0] flex flex-col shrink-0">
            <ScrollBtn d="M6 2l6 7H0z" className="h-[17px]" />
            <div className="h-[208px]" />
            <div className="h-[107px] bg-white border-2 border-[#aaa]" />
            <div className="flex-1" />
            <ScrollBtn d="M0 3h12L6 10z" className="h-[17px]" />
          </div>
        </div>
      </div>
      <div className="flex-1 border border-[#999] flex flex-col min-h-0">
        <div className={`h-[20px] ${DLG_COLS} [&>div]:pt-[2px]`}>
          {['', '编码', '名称', '规格型号', '单位', '含税预算价', '不含税预算价', '进项税率'].map((h, i) => <Head key={i} s={h} on={h === '名称'} />)}
        </div>
        {DLG_ROWS.map((r) => (
          <div key={r.n} className={`h-[26px] ${DLG_COLS} [&>div]:border-[#d4d4d4] [&>div]:pt-[2px]`}>
            <RowNo n={r.n} on={r.on} />
            <Cell className="pl-[2px] bg-[#fdfdf9]"><T s={r.code} /></Cell>
            <Cell className={`pl-[2px] bg-[#fdfdf9] ${r.on ? 'border-2 !border-[#808080]' : ''}`}><T s={r.name} /></Cell>
            <Cell />
            <Cell className="justify-center"><T s="m3" /></Cell>
            <Num s={r.a} className="bg-[#fdfdf9]" />
            <Num s={r.b} />
            <Cell />
          </div>
        ))}
        <div className="flex-1" />
        <div className="h-[14px] bg-[#e0e0e0] flex shrink-0">
          <ScrollBtn d="M3 6l6-5v10z" className="w-[13px]" />
          <div className="w-[519px] bg-[#c8c8c8]" />
          <div className="flex-1" />
          <ScrollBtn d="M9 6L3 1v10z" className="w-[13px]" />
        </div>
      </div>
    </div>
  </div>
);

const NAV = ['造价分析', '工程概况', '取费设置', '分部分项', '措施项目', '其他项目', '人材机汇总', '费用汇总'];

export default function App() {
  return (
    <div className="relative w-[1787px] h-[988px] overflow-hidden bg-white text-black text-[12px] [font-family:'Noto_Sans_CJK_SC',sans-serif]">
      <div className="flex flex-col h-full">
        {/* title bar */}
        <div className="h-[31px] flex shrink-0">
          {TITLE_ICONS}
          <div className="h-full pt-[6px] text-[12px] leading-[18px] text-[#222] whitespace-pre">广联达预算计价 - [清单计价 - 单位工程]</div>
        </div>
        {/* brand + app tabs */}
        <div className="h-[25px] flex border-b-2 border-[#00a9ee] shrink-0">
          <div className="w-[230px] bg-[#00a9ee] text-white flex items-center pl-[16px] shrink-0">
            <span className="w-[115px] shrink-0 inline-block origin-left scale-x-[1.38] [font-family:'Liberation_Sans',sans-serif] italic font-bold text-[22px] leading-none tracking-[1px]">Glodon</span>
            <span className="ml-[3px] text-[18px] font-bold italic leading-none">广联达</span>
            <Caret className="ml-[16px] [&>path]:fill-white" />
          </div>
          <div className="ml-[4px] w-[76px] pb-[2px] flex items-center justify-center text-[#13a2e6] text-[14px] border-b-2 border-[#00a9ee] mb-[-1px] bg-white">编制</div>
          <div className="w-[77px] pb-[2px] flex items-center justify-center text-[14px]">报表</div>
          <div className="flex-1" />
          <div className="flex items-center text-[14px] overflow-hidden">
            <svg width="12" height="8" viewBox="0 0 12 8"><path d="M1 7l5-5 5 5" fill="none" stroke="#1a9fe0" strokeWidth="2" /></svg>
            <svg width="17" height="18" viewBox="0 0 17 18" className="ml-[17px]"><circle cx="8.500" cy="8" r="6" fill="none" stroke="#25a81c" strokeWidth="2" /><circle cx="8.500" cy="8" r="3" fill="none" stroke="#25a81c" /><path d="M4 15a5 3 0 019 0l-4 2z" fill="#25a81c" /></svg>
            <span className="ml-[3px] w-[56px]">在线学习</span>
            <Caret className="ml-[8px]" />
            <svg width="12" height="12" viewBox="0 0 12 12" className="ml-[9px]"><path d="M0 0h5.500v5.500H0zM6.500 0H12v5.500H6.500zM0 6.500h5.500V12H0zM6.500 6.500H12V12H6.500z" fill="#00a0e8" /></svg>
            <span className="ml-[6px] w-[8px] overflow-hidden whitespace-nowrap">窗口</span>
          </div>
        </div>
        <Ribbon />
        {/* module tabs */}
        <div className="h-[37px] pt-[4px] flex border-b-2 border-[#3fb0e0] shrink-0">
          {NAV.map((n, i) => (
            <div key={n} className={`relative ${i === 0 ? 'w-[79px]' : n === '人材机汇总' ? 'w-[92px]' : 'w-[80px]'} border-r border-[#ddd] flex items-center justify-center ${n === '分部分项' ? 'text-[#13a2e6] font-bold' : ''}`}>
              {n}
              {n === '分部分项' && (
                <span className="absolute bottom-0 left-[36px] w-0 h-0 border-x-[4px] border-x-transparent border-b-[4px] border-b-[#3fb0e0]" />
              )}
            </div>
          ))}
        </div>
        <div className="flex-1 flex min-h-0">
          <Panel />
          <div className="w-[8px] bg-[#eefaff] shrink-0" />
          <div className="flex-1 flex flex-col min-w-0">
            <MainTable />
            <Lower />
          </div>
        </div>
      </div>
      <Dialog />
    </div>
  );
}
